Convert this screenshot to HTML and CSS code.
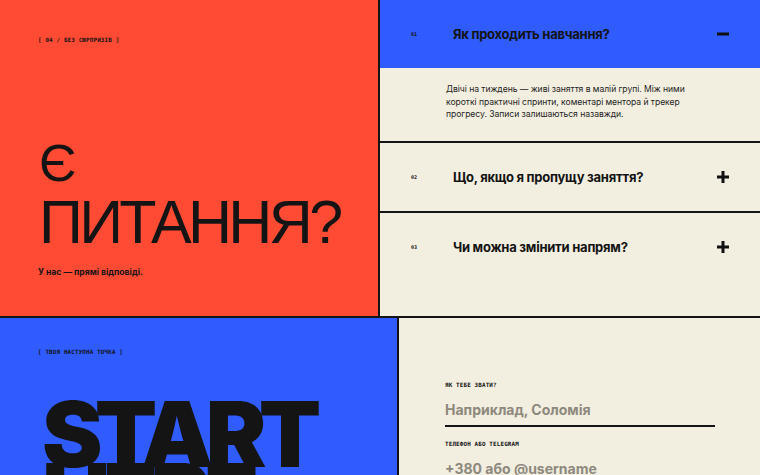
FILE: index.html
```html
<!DOCTYPE html>
<html lang="uk">
<head>
<meta charset="utf-8">
<title>FAQ</title>
<link rel="stylesheet" href="styles.css">
</head>
<body>
<div class="page">
  <section class="row top">
    <div class="intro">
      <p class="label">[ 04 / БЕЗ СЮРПРИЗІВ ]</p>
      <div class="intro-body">
        <h1 class="title"><span class="title-small">Є</span><br>ПИТАННЯ?</h1>
        <p class="lead">У нас — прямі відповіді.</p>
      </div>
    </div>
    <div class="faq">
      <div class="item open">
        <div class="faq-head">
          <span class="num">01</span>
          <span class="q">Як проходить навчання?</span>
          <svg class="icon" width="12" height="12" viewBox="0 0 12 12"><path d="M0 6h12" stroke="#111" stroke-width="3"/></svg>
        </div>
        <div class="answer"><p>Двічі на тиждень — живі заняття в малій групі. Між ними короткі практичні спринти, коментарі ментора й трекер прогресу. Записи залишаються назавжди.</p></div>
      </div>
      <div class="item">
        <div class="faq-head">
          <span class="num">02</span>
          <span class="q">Що, якщо я пропущу заняття?</span>
          <svg class="icon" width="12" height="12" viewBox="0 0 12 12"><path d="M0 6h12M6 0v12" stroke="#111" stroke-width="3"/></svg>
        </div>
      </div>
      <div class="item last">
        <div class="faq-head">
          <span class="num">03</span>
          <span class="q">Чи можна змінити напрям?</span>
          <svg class="icon" width="12" height="12" viewBox="0 0 12 12"><path d="M0 6h12M6 0v12" stroke="#111" stroke-width="3"/></svg>
        </div>
      </div>
    </div>
  </section>
  <section class="row bottom">
    <div class="cta">
      <p class="label">[ ТВОЯ НАСТУПНА ТОЧКА ]</p>
      <h2 class="big">START<br>HERE</h2>
    </div>
    <form class="form">
      <label class="field">
        <span class="label">ЯК ТЕБЕ ЗВАТИ?</span>
        <input class="input" type="text" placeholder="Наприклад, Соломія">
      </label>
      <label class="field">
        <span class="label">ТЕЛЕФОН АБО TELEGRAM</span>
        <input class="input" type="text" placeholder="+380 або @username">
      </label>
    </form>
  </section>
</div>
</body>
</html>
```
FILE: styles.css
```css
* { box-sizing: border-box; }
html, body { margin: 0; padding: 0; }
body {
  background: #141414;
  font-family: Inter, "Liberation Sans", sans-serif;
  color: #141414;
  width: 760px;
  height: 475px;
  overflow: hidden;
}
p, h1, h2 { margin: 0; }

.page {
  display: flex;
  flex-direction: column;
  gap: 2px;
  background: #141414;
}

.row { display: grid; gap: 2px; }
.top { grid-template-columns: 378px 1fr; height: 316px; }
.bottom { grid-template-columns: 397px 1fr; height: 400px; }

.label {
  display: block;
  font-family: "DejaVu Sans Mono", "Liberation Mono", monospace;
  font-weight: bold;
  font-size: 5.9px;
  line-height: 8px;
  letter-spacing: 0.15px;
  color: #141414;
}

/* intro */
.intro {
  background: #FF4B33;
  padding: 36px 38px 38px;
  display: flex;
  flex-direction: column;
  justify-content: space-between;
}
.title {
  font-family: "Liberation Sans", Inter, sans-serif;
  font-weight: 400;
  font-size: 61px;
  line-height: 59px;
  letter-spacing: -0.06em;
  margin-left: 1px;
}
.title-small {
  font-size: 52px;
  letter-spacing: 0;
}
.lead {
  margin-top: 14px;
  font-size: 8.6px;
  font-weight: 700;
  line-height: 12px;
}

/* faq */
.faq {
  display: flex;
  flex-direction: column;
  gap: 2px;
  background: #141414;
}
.item { background: #F2EEE0; }
.item.last { flex: 1; }
.faq-head {
  height: 68px;
  display: grid;
  grid-template-columns: 42px 1fr auto;
  align-items: center;
  padding: 0 31px 0 31px;
}
.item.open .faq-head { background: #2F5BFF; }
.num {
  font-family: "DejaVu Sans Mono", monospace;
  font-weight: bold;
  font-size: 5px;
}
.q {
  font-size: 13px;
  font-weight: 750;
  letter-spacing: -0.25px;
}
.icon { display: block; }
.answer {
  padding: 15px 0 20px 66px;
}
.answer p {
  max-width: 250px;
  font-size: 8.6px;
  line-height: 12.5px;
  letter-spacing: -0.05px;
  color: #1e1e1e;
}

/* cta */
.cta {
  background: #2F5BFF;
  padding: 30px 38px 0;
}
.big {
  margin-top: 47px;
  font-family: Inter, "Liberation Sans", sans-serif;
  font-weight: 900;
  font-size: 91px;
  line-height: 62px;
  letter-spacing: -0.085em;
  margin-left: 4px;
}

/* form */
.form {
  margin: 0;
  background: #F2EEE0;
  padding: 63px 45px 0 46px;
  display: flex;
  flex-direction: column;
}
.field {
  display: flex;
  flex-direction: column;
  width: 270px;
  margin-bottom: 13px;
}
.field .label { margin-bottom: 4px; }
.input {
  height: 34px;
  padding: 0;
  border: 0;
  border-bottom: 2px solid #141414;
  background: transparent;
  font-family: Inter, "Liberation Sans", sans-serif;
  font-size: 14px;
  font-weight: 700;
  color: #141414;
  outline: none;
}
.input::placeholder { color: #8D897D; }
```
